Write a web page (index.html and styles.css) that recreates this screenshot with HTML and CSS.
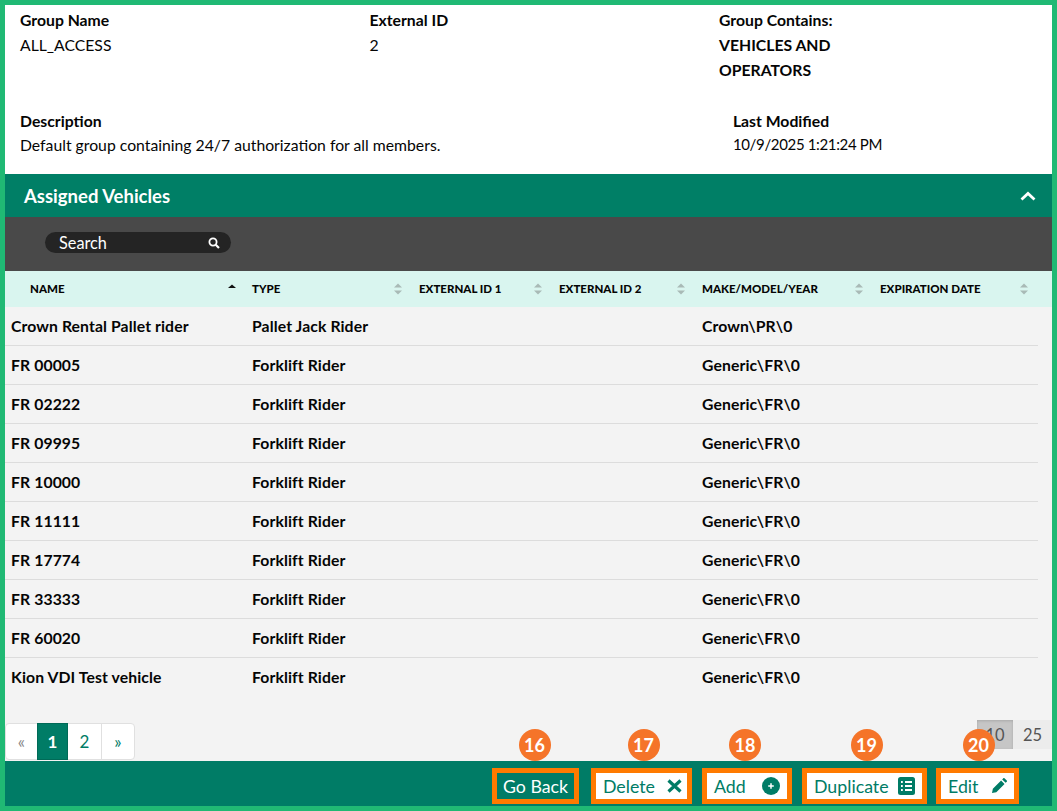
FILE: index.html
```html
<!DOCTYPE html>
<html lang="en">
<head>
<meta charset="utf-8">
<title>Group Details</title>
<link rel="stylesheet" href="styles.css">
</head>
<body>
<div class="frame">
  <section class="info">
    <div class="info-row info-top">
      <div class="field"><div class="label">Group Name</div><div class="value">ALL_ACCESS</div></div>
      <div class="field"><div class="label">External ID</div><div class="value">2</div></div>
      <div class="field contains"><div class="label">Group Contains:</div><div class="value strong">VEHICLES AND OPERATORS</div></div>
    </div>
    <div class="info-row info-bottom">
      <div class="field"><div class="label">Description</div><div class="value">Default group containing 24/7 authorization for all members.</div></div>
      <div class="field"><div class="label">Last Modified</div><div class="value date">10/9/2025 1:21:24 PM</div></div>
    </div>
  </section>

  <div class="band">
    <span class="band-title">Assigned Vehicles</span>
    <svg class="chevron" width="16" height="10" viewBox="0 0 16 10"><polyline points="1.5,8.5 8,2.5 14.5,8.5" fill="none" stroke="#fff" stroke-width="2.8"/></svg>
  </div>

  <div class="toolbar">
    <div class="search">
      <span>Search</span>
      <svg width="12" height="12" viewBox="0 0 12 12"><circle cx="5" cy="5" r="3.6" fill="none" stroke="#fff" stroke-width="1.8"/><line x1="7.7" y1="7.7" x2="11" y2="11" stroke="#fff" stroke-width="2.2"/></svg>
    </div>
  </div>

  <div class="table-head grid">
    <div class="th first"><span>NAME</span><svg class="sort" width="10" height="12" viewBox="0 0 10 12"><path d="M5 1.5 9 5H1Z" fill="#111"/></svg></div>
    <div class="th"><span>TYPE</span><svg class="sort" width="10" height="12" viewBox="0 0 10 12"><path d="M5 .5 9 4.5H1ZM5 11.500 1 7.500H9Z" fill="#a9bab6"/></svg></div>
    <div class="th"><span>EXTERNAL ID 1</span><svg class="sort" width="10" height="12" viewBox="0 0 10 12"><path d="M5 .5 9 4.500H1ZM5 11.500 1 7.500H9Z" fill="#a9bab6"/></svg></div>
    <div class="th"><span>EXTERNAL ID 2</span><svg class="sort" width="10" height="12" viewBox="0 0 10 12"><path d="M5 .5 9 4.500H1ZM5 11.500 1 7.500H9Z" fill="#a9bab6"/></svg></div>
    <div class="th"><span>MAKE/MODEL/YEAR</span><svg class="sort" width="10" height="12" viewBox="0 0 10 12"><path d="M5 .5 9 4.500H1ZM5 11.500 1 7.500H9Z" fill="#a9bab6"/></svg></div>
    <div class="th"><span>EXPIRATION DATE</span><svg class="sort" width="10" height="12" viewBox="0 0 10 12"><path d="M5 .5 9 4.500H1ZM5 11.500 1 7.500H9Z" fill="#a9bab6"/></svg></div>
  </div>

  <main class="content">
    <div class="rows">
      <div class="row grid"><div>Crown Rental Pallet rider</div><div>Pallet Jack Rider</div><div></div><div></div><div>Crown\PR\0</div><div></div></div>
      <div class="row grid"><div>FR 00005</div><div>Forklift Rider</div><div></div><div></div><div>Generic\FR\0</div><div></div></div>
      <div class="row grid"><div>FR 02222</div><div>Forklift Rider</div><div></div><div></div><div>Generic\FR\0</div><div></div></div>
      <div class="row grid"><div>FR 09995</div><div>Forklift Rider</div><div></div><div></div><div>Generic\FR\0</div><div></div></div>
      <div class="row grid"><div>FR 10000</div><div>Forklift Rider</div><div></div><div></div><div>Generic\FR\0</div><div></div></div>
      <div class="row grid"><div>FR 11111</div><div>Forklift Rider</div><div></div><div></div><div>Generic\FR\0</div><div></div></div>
      <div class="row grid"><div>FR 17774</div><div>Forklift Rider</div><div></div><div></div><div>Generic\FR\0</div><div></div></div>
      <div class="row grid"><div>FR 33333</div><div>Forklift Rider</div><div></div><div></div><div>Generic\FR\0</div><div></div></div>
      <div class="row grid"><div>FR 60020</div><div>Forklift Rider</div><div></div><div></div><div>Generic\FR\0</div><div></div></div>
      <div class="row grid last"><div>Kion VDI Test vehicle</div><div>Forklift Rider</div><div></div><div></div><div>Generic\FR\0</div><div></div></div>
    </div>
    <div class="pager-bar">
      <nav class="pager">
        <a class="page muted">«</a><a class="page current">1</a><a class="page">2</a><a class="page">»</a>
      </nav>
      <div class="sizes"><span class="size active">10</span><span class="size">25</span></div>
    </div>
  </main>

  <footer class="actions">
    <button class="btn dark"><span class="badge">16</span>Go Back</button>
    <button class="btn"><span class="badge">17</span>Delete
      <svg class="x-icon" width="15" height="14" viewBox="0 0 15 14"><path d="M1.500 1.500 13.500 12.500M13.500 1.500 1.500 12.500" stroke="#007c66" stroke-width="3.200" fill="none"/></svg>
    </button>
    <button class="btn"><span class="badge">18</span>Add
      <svg width="18" height="18" viewBox="0 0 18 18"><circle cx="9" cy="9" r="9" fill="#007c66"/><path d="M9 6.200V11.800M6.200 9H11.800" stroke="#fff" stroke-width="1.500"/></svg>
    </button>
    <button class="btn"><span class="badge">19</span>Duplicate
      <svg width="17" height="18" viewBox="0 0 17 18"><rect width="17" height="18" rx="2.500" fill="#007c66"/><path d="M3 5H4.800M7 5H14M3 9H4.800M7 9H14M3 13H4.800M7 13H14" stroke="#fff" stroke-width="2"/></svg>
    </button>
    <button class="btn"><span class="badge">20</span>Edit
      <svg width="15" height="15" viewBox="0 0 14 14"><path d="M0 14 .8 10 8.500 2.300 11.700 5.500 4 13.200ZM9.500 1.300 10.600.2C10.900-.1 11.300-.1 11.600.2L13.800 2.400C14.100 2.700 14.100 3.100 13.800 3.400L12.700 4.500Z" fill="#007c66"/></svg>
    </button>
  </footer>
</div>
</body>
</html>
```

FILE: styles.css
```css
* { box-sizing: border-box; }
html, body { margin: 0; padding: 0; }
body { font-family: "Lato", "Liberation Sans", sans-serif; font-size: 15.750px; color: #050505; }

.frame {
  width: 1057px;
  height: 811px;
  border: 5px solid #20b974;
  display: flex;
  flex-direction: column;
  background: #fff;
  overflow: hidden;
}

.info { height: 169px; flex: none; padding: 2px 15px 0; }
.info-row { display: flex; }
.info-top { height: 101px; }
.info-top .field { width: 349.500px; }
.info-top .contains { width: 130px; }
.info-bottom { justify-content: space-between; padding-right: 155px; }
.label { font-weight: 700; line-height: 25px; }
.value { line-height: 25px; }
.info-bottom .value { margin-top: -1px; }
.value.date { font-size: 15px; letter-spacing: -.35px; white-space: nowrap; }
.strong { font-weight: 700; }

.band {
  height: 43px;
  flex: none;
  background: #007f66;
  color: #fff;
  display: flex;
  align-items: center;
  justify-content: space-between;
  padding: 0 16px 0 19px;
}
.band-title { font-size: 18.500px; font-weight: 700; }

.toolbar {
  height: 54px;
  flex: none;
  background: #494949;
  display: flex;
  align-items: flex-start;
  padding: 15px 0 0 40px;
}
.search {
  width: 186px;
  height: 21px;
  border-radius: 11px;
  background: #242424;
  color: #fff;
  font-size: 16.300px;
  display: flex;
  align-items: center;
  justify-content: space-between;
  padding: 0 11px 0 14px;
}

.grid { display: grid; grid-template-columns: 242px 167px 140px 143px 178px 1fr; }

.table-head { height: 36px; flex: none; background: #d9f5ef; }
.th {
  display: flex;
  align-items: center;
  justify-content: space-between;
  padding: 0 11px 1px 5px;
  font-size: 11.500px;
  font-weight: 900;
}
.th.first { padding-left: 25px; padding-right: 10px; }
.th:last-child { padding-right: 23px; }

.content {
  flex: 1;
  background: #f3f3f3;
  display: flex;
  flex-direction: column;
  min-height: 0;
}
.rows { width: 1033px; flex: 1; }
.row {
  height: 39px;
  padding-bottom: 1px;
  align-items: center;
  font-weight: 700;
  letter-spacing: .1px;
  border-bottom: 1px solid #dcdcdc;
}
.row.last { border-bottom-color: transparent; }
.row > div { padding-left: 5px; }
.row > div:first-child { padding-left: 6px; }

.pager-bar {
  height: 41px;
  flex: none;
  display: flex;
  justify-content: space-between;
  align-items: flex-start;
}
.pager {
  display: flex;
  height: 37px;
  margin-top: 3px;
  background: #fff;
  border: 1px solid #e0e0e0;
  border-radius: 4px;
}
.page {
  width: 34px;
  display: flex;
  align-items: center;
  justify-content: center;
  font-size: 17px;
  color: #007c66;
  border-right: 1px solid #e0e0e0;
}
.page:first-child { width: 31px; }
.page:last-child { width: 32px; border-right: 0; }
.page.muted { color: #888; border-right: 0; }
.page.current { width: 31px; background: #007c66; color: #fff; font-weight: 700; border: 1px solid #006a57; margin: -1px 0; }

.sizes { display: flex; }
.size {
  height: 29px;
  background: #ececec;
  color: #555;
  font-size: 16.500px;
  display: flex;
  align-items: center;
  justify-content: center;
}
.size.active { width: 36px; background: #c6c6c6; box-shadow: inset 0 1px 3px rgba(0,0,0,.15); }
.size + .size { width: 39px; }

.actions {
  height: 45px;
  flex: none;
  background: #007c66;
  display: flex;
  justify-content: flex-end;
  align-items: flex-start;
  padding: 7px 33px 0 0;
  gap: 10px;
}
.btn {
  position: relative;
  height: 36px;
  border: 5px solid #ff7a00;
  background: #fff;
  color: #007c66;
  font-family: inherit;
  font-size: 17.750px;
  display: flex;
  align-items: center;
  justify-content: space-between;
  padding: 0 7px 1px;
  margin: 0;
}
.btn:nth-child(1) { width: 87px; margin-right: 2px; }
.btn:nth-child(2) { width: 101px; }
.btn:nth-child(3) { width: 90px; }
.btn:nth-child(4) { width: 125px; }
.btn:nth-child(5) { width: 83px; margin-left: -1px; }
.btn.dark { background: #007c66; color: #fff; justify-content: center; padding: 0 0 1px; }
.x-icon { margin-right: -2px; }
.badge {
  position: absolute;
  left: 50%;
  top: -44px;
  width: 32px;
  height: 32px;
  margin-left: -17px;
  border-radius: 50%;
  background: #f57429;
  color: #fff;
  font-size: 18px;
  font-weight: 700;
  display: flex;
  align-items: center;
  justify-content: center;
}
.btn:nth-child(2) .badge { margin-left: -14px; }
.btn:nth-child(3) .badge { margin-left: -18px; }
.btn:nth-child(4) .badge { margin-left: -14px; }
.btn:nth-child(5) .badge { margin-left: -15px; }
```
